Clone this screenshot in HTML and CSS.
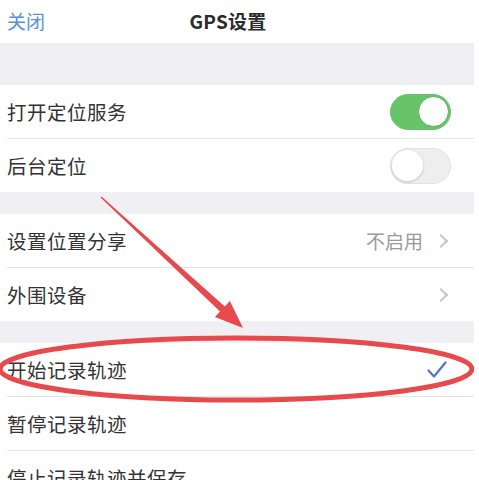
FILE: index.html
```html
<!DOCTYPE html>
<html lang="zh">
<head>
<meta charset="utf-8">
<title>GPS设置</title>
<link rel="stylesheet" href="styles.css">
</head>
<body>
<div class="screen">
  <header class="nav">
    <span class="nav-close">关闭</span>
    <span class="nav-title">GPS设置</span>
    <span></span>
  </header>
  <div class="gap gap-lg"></div>
  <ul class="group">
    <li class="row"><div class="row-body"><span class="label">打开定位服务</span><span class="switch on"><span class="knob"></span></span></div></li>
    <li class="row"><div class="row-body"><span class="label">后台定位</span><span class="switch"><span class="knob"></span></span></div></li>
  </ul>
  <div class="gap"></div>
  <ul class="group">
    <li class="row"><div class="row-body"><span class="label">设置位置分享</span><span class="accessory"><span class="value">不启用</span><span class="chev"></span></span></div></li>
    <li class="row"><div class="row-body"><span class="label">外围设备</span><span class="accessory"><span class="chev"></span></span></div></li>
  </ul>
  <div class="gap"></div>
  <ul class="group">
    <li class="row"><div class="row-body"><span class="label">开始记录轨迹</span><span class="accessory"><svg class="check" viewBox="0 0 20 18" width="20" height="18"><path d="M1.5 9.5 L7 15.5 L18.5 1.5" fill="none" stroke="#4a78d2" stroke-width="2.2" stroke-linecap="round" stroke-linejoin="round"/></svg></span></div></li>
    <li class="row"><div class="row-body"><span class="label">暂停记录轨迹</span></div></li>
    <li class="row"><div class="row-body"><span class="label">停止记录轨迹并保存</span></div></li>
  </ul>
  <svg class="annot" viewBox="0 0 479 480" width="479" height="480">
    <polygon points="101.5,196.4 224.8,306.4 229.9,300.9 243,328 214.9,317.1 220,311.6 100.5,197.6" fill="#e8494d"/>
    <ellipse cx="236" cy="369" rx="236" ry="31" fill="none" stroke="#e8494d" stroke-width="5"/>
  </svg>
</div>
</body>
</html>
```

FILE: styles.css
```css
* { box-sizing: border-box; }
html, body { margin: 0; padding: 0; background: #ffffff; }
body {
  font-family: "Noto Sans CJK SC", "Noto Sans", sans-serif;
  color: #333333;
  overflow: hidden;
}
.screen {
  position: relative;
  width: 474px;
  height: 480px;
  overflow: hidden;
  background: #ffffff;
}
.nav {
  height: 43px;
  display: grid;
  grid-template-columns: 1fr auto 1fr;
  align-items: center;
  padding: 0 25px 2px 7px;
  background: #ffffff;
}
.nav-close {
  font-size: 19px;
  color: #5b8ed6;
}
.nav-title {
  font-size: 19px;
  font-weight: 700;
  color: #2b2b2b;
  letter-spacing: 0.2px;
}
.gap { height: 22px; background: #efeff4; }
.gap-lg { height: 42px; }
.group {
  list-style: none;
  margin: 0;
  padding: 0;
  background: #ffffff;
}
.row { padding-left: 7px; }
.row-body {
  height: 53px;
  display: flex;
  align-items: center;
  justify-content: space-between;
  padding-right: 23px;
}
.row + .row .row-body {
  height: 54px;
  border-top: 1px solid #e4e4e8;
}
.label {
  font-size: 19.5px;
  color: #333333;
  letter-spacing: 0.5px;
}
.accessory {
  display: flex;
  align-items: center;
  gap: 13px;
}
.value {
  font-size: 19px;
  color: #9a9a9a;
}
.chev {
  width: 10px;
  height: 10px;
  border-top: 2px solid #c5c5ca;
  border-right: 2px solid #c5c5ca;
  transform: rotate(45deg);
  margin-right: 5px;
}
.check { display: block; margin-right: 4px; }
.switch {
  position: relative;
  width: 61px;
  height: 36px;
  border-radius: 18px;
  background: #eeeeee;
  border: 1.5px solid #e2e2e2;
}
.switch .knob {
  position: absolute;
  top: 1px;
  left: 1px;
  width: 31px;
  height: 31px;
  border-radius: 50%;
  background: #ffffff;
  box-shadow: 0 1px 3px rgba(0,0,0,0.18);
}
.switch.on {
  background: #67c46a;
  border-color: #67c46a;
}
.switch.on .knob {
  left: auto;
  right: 1px;
  border: 1.5px solid #5fae62;
  box-shadow: none;
}
.annot {
  position: absolute;
  left: 0;
  top: 0;
  pointer-events: none;
}
```
